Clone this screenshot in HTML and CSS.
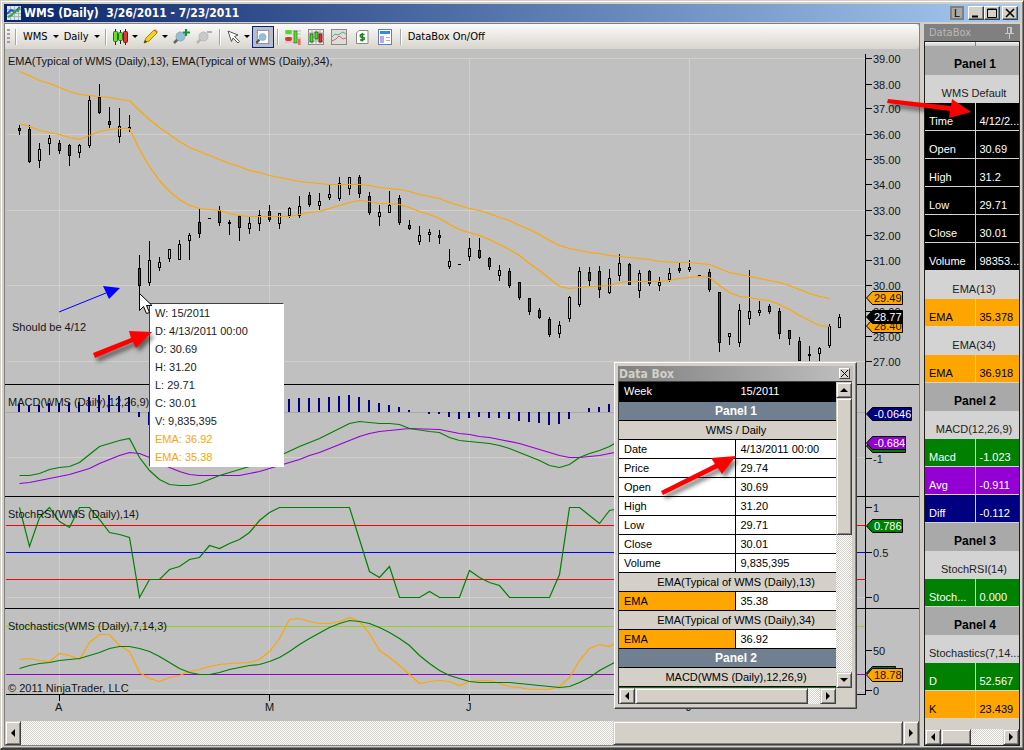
FILE: index.html
```html
<!DOCTYPE html>
<html lang="en">
<head>
<meta charset="utf-8">
<title>WMS (Daily) 3/26/2011 - 7/23/2011</title>
<link rel="stylesheet" href="styles.css">
</head>
<body>
<div class="window">
  <header class="titlebar">
    <svg class="title-icon" width="14" height="14" viewBox="0 0 14 14"><rect width="14" height="14" fill="#dfe6ea"/><path d="M0 3.500h14M0 7.500h14M0 10.500h14M3.500 0v14M7.500 0v14M11.500 0v14" stroke="#9fb6c4" stroke-width="1"/><path d="M0 8l4-4 4 2 5-5" fill="none" stroke="#2d59c8" stroke-width="2"/><path d="M1 11l4-2 3-4 3 0 2-3" fill="none" stroke="#3ca43c" stroke-width="2"/></svg>
    <h1 class="title">WMS (Daily)&nbsp; 3/26/2011 - 7/23/2011</h1>
    <div class="window-buttons">
      <button class="cap cap-link" aria-label="Link">L</button>
      <button class="cap" aria-label="Minimize"><svg width="10" height="10"><path d="M1 8.500h6" stroke="#000" stroke-width="2"/></svg></button>
      <button class="cap" aria-label="Maximize"><svg width="10" height="10"><path d="M.5 1h9v8.500h-9zM0 1.500h10" fill="none" stroke="#000"/></svg></button>
      <button class="cap cap-close" aria-label="Close"><svg width="10" height="10"><path d="M1 1l8 8M9 1l-8 8" stroke="#000" stroke-width="1.600"/></svg></button>
    </div>
  </header>

  <div class="body">
    <main class="chart-pane">
      <nav class="toolbar" aria-label="Chart tools">
        <span class="grip"></span><span class="sep"></span>
        <button class="tool tool-text">WMS <i class="caret"></i></button>
        <button class="tool tool-text">Daily <i class="caret"></i></button>
        <span class="sep"></span>
        <button class="tool" aria-label="Chart style"><svg width="16" height="16" viewBox="0 0 16 16"><path d="M2.500 0v16M7.500 1v14M12.500 0v16" stroke="#222"/><rect x=".5" y="2.500" width="4" height="10" rx="1" fill="#62e22e" stroke="#27701a"/><rect x="5.500" y="3.500" width="4" height="8" rx="1" fill="#62e22e" stroke="#27701a"/><rect x="10.500" y="2.500" width="4" height="11" rx="1" fill="#e63333" stroke="#7d1515"/></svg><i class="caret"></i></button>
        <button class="tool" aria-label="Draw"><svg width="16" height="16" viewBox="0 0 16 16"><path d="M1 14l2-5 8-8 3 3-8 8z" fill="#f5d21b" stroke="#a8820d"/><path d="M11 1l1-1 3 3-1 1z" fill="#e86a5c"/><path d="M1 14l1-3 2 2z" fill="#333"/></svg><i class="caret"></i></button>
        <button class="tool" aria-label="Zoom in"><svg width="17" height="16" viewBox="0 0 17 16"><path d="M1 14l4-4" stroke="#666" stroke-width="2.500"/><circle cx="7.500" cy="7.500" r="4.500" fill="#8fc0df" stroke="#9aa4ac"/><path d="M13 0v7M10 3.500h7" stroke="#0a9a2c" stroke-width="2"/></svg></button>
        <button class="tool" aria-label="Zoom out" disabled><svg width="17" height="16" viewBox="0 0 17 16"><path d="M1 14l4-4" stroke="#b5b5b5" stroke-width="2.500"/><circle cx="7.500" cy="7.500" r="4.500" fill="#c9c9c9" stroke="#b9b9b9"/><path d="M11 3h5" stroke="#b0b0b0" stroke-width="2"/></svg></button>
        <span class="sep"></span>
        <button class="tool" aria-label="Pointer"><svg width="14" height="16" viewBox="1 0 14 16"><path d="M2 2l10 4-3.500 1.500 5 5-1.500 1.500-5-5-1.500 3.500z" fill="#fff" stroke="#555"/></svg><i class="caret"></i></button>
        <button class="tool tool-on" aria-label="Zoom window" aria-pressed="true"><svg width="16" height="16" viewBox="0 0 16 16"><rect x="1.500" y=".5" width="13" height="15" fill="#fff" stroke="#8a8a8a"/><path d="M0 15l4-4" stroke="#555" stroke-width="2.500"/><circle cx="7.500" cy="8" r="4" fill="#8fc0df" stroke="#aab"/></svg></button>
        <span class="sep"></span>
        <button class="tool tool-wide" aria-label="Chart trader"><svg width="16" height="16" viewBox="0 0 16 16"><path d="M0 2h16M0 5h16M0 9h16M0 13h16" stroke="#bbb"/><rect x="0" y="1" width="7" height="4" rx="2" fill="#4fdd22"/><rect x="0" y="8" width="7" height="4" rx="2" fill="#e23030"/><rect x="9" y="2" width="3" height="12" fill="#59d92f" stroke="#3a7a24" stroke-width=".7"/><rect x="13" y="10" width="2.500" height="6" fill="#e66"/></svg></button>
        <button class="tool tool-wide" aria-label="Data series"><svg width="16" height="16" viewBox="0 0 16 16"><rect x=".5" y=".5" width="15" height="15" fill="#eee" stroke="#888"/><path d="M0 4h16M0 8h16M0 12h16M4 0v16M8 0v16M12 0v16" stroke="#aaa"/><rect x="2" y="5" width="3" height="8" fill="#4fdd22" stroke="#185c10" stroke-width=".8"/><rect x="7" y="3" width="3" height="7" fill="#4fdd22" stroke="#185c10" stroke-width=".8"/><rect x="11" y="5" width="3" height="8" fill="#e23030" stroke="#701010" stroke-width=".8"/></svg></button>
        <button class="tool tool-wide" aria-label="Indicators"><svg width="16" height="16" viewBox="0 0 16 16"><rect x=".5" y=".5" width="15" height="15" fill="#dcdcdc" stroke="#888"/><path d="M1 8l3-3 3 1 5-3 3 2" fill="none" stroke="#50b080"/><path d="M1 12l4-2 3-3 4 3 3-1" fill="none" stroke="#e06060"/></svg></button>
        <button class="tool tool-wide" aria-label="Strategies"><svg width="16" height="16" viewBox="0 0 16 16"><path d="M5 1.500h9v13H2.500V4z" fill="#fff" stroke="#8a8a8a"/><path d="M10.500 5.500H7.500a1.300 1.300 0 0 0 0 2.700h1.500a1.300 1.300 0 0 1 0 2.800H6M8.300 4v8.500" fill="none" stroke="#1f7a1f" stroke-width="1.500"/></svg></button>
        <button class="tool tool-wide" aria-label="Properties"><svg width="16" height="16" viewBox="0 0 16 16"><rect x="1.500" y=".5" width="13" height="15" fill="#fff" stroke="#667fb5"/><rect x="3" y="2" width="10" height="3" fill="#2f8de4"/><rect x="3" y="7" width="4" height="7" fill="#b9a7f2"/><path d="M9 8.500h4M9 11.500h4" stroke="#b0a8d8"/></svg></button>
        <span class="sep"></span>
        <button class="tool tool-text">DataBox On/Off</button>
      </nav>

      <div class="plot">
        <svg id="chart" class="chart" viewBox="5 49 914 671" role="img" aria-label="WMS daily price chart with indicators"></svg>

        <ul class="tip">
          <li>W: 15/2011</li><li>D: 4/13/2011 00:00</li><li>O: 30.69</li><li>H: 31.20</li><li>L: 29.71</li><li>C: 30.01</li><li>V: 9,835,395</li>
          <li class="tip-ema">EMA: 36.92</li><li class="tip-ema">EMA: 35.38</li>
        </ul>

        <section class="databox">
          <div class="databox-title"><span>Data Box</span><button class="mini-close" aria-label="Close Data Box"><svg width="7" height="7"><path d="M0 0l7 7M7 0L0 7" stroke="#000"/></svg></button></div>
          <div class="databox-body">
            <div class="databox-view">
              <table class="values">
                <tr class="week"><td>Week</td><td>15/2011</td></tr>
                <tr class="panel"><th colspan="2">Panel 1</th></tr>
                <tr class="series"><td colspan="2">WMS / Daily</td></tr>
                <tr><td>Date</td><td>4/13/2011 00:00</td></tr>
                <tr><td>Price</td><td>29.74</td></tr>
                <tr><td>Open</td><td>30.69</td></tr>
                <tr><td>High</td><td>31.20</td></tr>
                <tr><td>Low</td><td>29.71</td></tr>
                <tr><td>Close</td><td>30.01</td></tr>
                <tr><td>Volume</td><td>9,835,395</td></tr>
                <tr class="series"><td colspan="2">EMA(Typical of WMS (Daily),13)</td></tr>
                <tr class="ema"><td>EMA</td><td>35.38</td></tr>
                <tr class="series"><td colspan="2">EMA(Typical of WMS (Daily),34)</td></tr>
                <tr class="ema"><td>EMA</td><td>36.92</td></tr>
                <tr class="panel"><th colspan="2">Panel 2</th></tr>
                <tr class="series"><td colspan="2">MACD(WMS (Daily),12,26,9)</td></tr>
              </table>
            </div>
            <div class="vscroll"><button class="sb" aria-label="Up"><i class="tri up"></i></button><span class="thumb vthumb"></span><span class="fill"></span><button class="sb" aria-label="Down"><i class="tri down"></i></button></div>
            <div class="hscroll"><button class="sb" aria-label="Left"><i class="tri left"></i></button><span class="thumb hthumb"></span><span class="fill"></span><button class="sb" aria-label="Right"><i class="tri right"></i></button></div>
          </div>
        </section>
      </div>

      <div class="hscroll main-scroll"><button class="sb" aria-label="Scroll left"><i class="tri left"></i></button><span class="fill"></span><span class="thumb main-thumb"></span><button class="sb" aria-label="Scroll right"><i class="tri right"></i></button></div>
    </main>

    <aside class="side">
      <div class="side-title"><span>DataBox</span><svg width="9" height="12" viewBox="0 0 9 12"><path d="M2.500 0v6M2.500.5h4M5.500 0v6M6.500 0v6M0 6.500h9M4.500 7v5" fill="none" stroke="#c8c8c8"/></svg></div>
      <div class="side-body">
        <table class="side-table">
          <colgroup><col class="col-name"><col></colgroup>
          <tr class="head"><td></td><td></td></tr>
          <tr class="panel"><th colspan="2">Panel 1</th></tr>
          <tr class="series"><td colspan="2">WMS Default</td></tr>
          <tr class="k"><td>Time</td><td>4/12/2...</td></tr>
          <tr class="k"><td>Open</td><td>30.69</td></tr>
          <tr class="k"><td>High</td><td>31.2</td></tr>
          <tr class="k"><td>Low</td><td>29.71</td></tr>
          <tr class="k"><td>Close</td><td>30.01</td></tr>
          <tr class="k"><td>Volume</td><td>98353...</td></tr>
          <tr class="series"><td colspan="2">EMA(13)</td></tr>
          <tr class="o"><td>EMA</td><td>35.378</td></tr>
          <tr class="series"><td colspan="2">EMA(34)</td></tr>
          <tr class="o"><td>EMA</td><td>36.918</td></tr>
          <tr class="panel"><th colspan="2">Panel 2</th></tr>
          <tr class="series"><td colspan="2">MACD(12,26,9)</td></tr>
          <tr class="g"><td>Macd</td><td>-1.023</td></tr>
          <tr class="v"><td>Avg</td><td>-0.911</td></tr>
          <tr class="n"><td>Diff</td><td>-0.112</td></tr>
          <tr class="panel"><th colspan="2">Panel 3</th></tr>
          <tr class="series"><td colspan="2">StochRSI(14)</td></tr>
          <tr class="g"><td>Stoch...</td><td>0.000</td></tr>
          <tr class="panel"><th colspan="2">Panel 4</th></tr>
          <tr class="series"><td colspan="2">Stochastics(7,14...</td></tr>
          <tr class="g"><td>D</td><td>52.567</td></tr>
          <tr class="o"><td>K</td><td>23.439</td></tr>
        </table>
        <div class="hscroll"><button class="sb" aria-label="Left"><i class="tri left"></i></button><span class="thumb side-thumb"></span><span class="fill"></span><button class="sb" aria-label="Right"><i class="tri right"></i></button></div>
      </div>
    </aside>
  </div>

  <svg class="notes" width="1024" height="750" viewBox="0 0 1024 750" aria-hidden="true">
    <path class="cursor" d="M139.500 293.500v17l4-4 3 7 3-1-3-7h5.500z"/>
    <g class="arrow">
      <path d="M93 353l38-15-2-7 23 1-16 16-3-6-38 16z"/>
      <path d="M661 491l54-27-4-6 25-2-14 18-4-6-55 27z"/>
      <path d="M888 99l63 7 1-7 19 13-22 6 1-7-63-8z"/>
    </g>
  </svg>
</div>
<script src="chart.js"></script>
</body>
</html>
```
FILE: styles.css
```css
* { box-sizing: border-box; }
body { margin: 0; background: #d4d0c8; font-family: "Liberation Sans", Arial, sans-serif; font-size: 11px; color: #000; }
button { font: inherit; color: inherit; padding: 0; margin: 0; }
ul, h1 { margin: 0; padding: 0; }

.window { position: relative; min-height: 100vh; display: flex; flex-direction: column; padding: 3px 3px 2px 3px; border: 1px solid #d4d0c8; border-right-color: #404040; border-bottom: 2px solid #404040; box-shadow: inset 1px 1px #fff, inset -1px -1px #808080; }

.titlebar { display: flex; align-items: center; height: 18px; padding: 0 2px 0 3px; gap: 3px; background: linear-gradient(90deg, #0a246a, #a6caf0); }
.title { flex: 1; font: bold 12px/18px "DejaVu Sans Condensed", "DejaVu Sans", sans-serif; color: #fff; }
.window-buttons { display: flex; }
.cap { width: 16px; height: 14px; display: flex; align-items: center; justify-content: center; background: #d4d0c8; border: 1px solid; border-color: #fff #404040 #404040 #fff; box-shadow: inset -1px -1px #808080; }
.cap-link { width: 14px; margin-right: 4px; background: #a9a9a9; border: 2px solid #808080; box-shadow: none; line-height: 10px; }
.cap-close { margin-left: 2px; }

.body { flex: 1; display: flex; gap: 4px; }
.chart-pane { flex: 1; min-width: 0; display: flex; flex-direction: column; margin-top: 1px; border: 1px solid #808080; background: #c0c0c0; }

.toolbar { display: flex; align-items: center; height: 25px; padding-left: 2px; background: linear-gradient(#fbfbfa, #d8d5ce); border-radius: 0 4px 4px 0; font-family: "DejaVu Sans Condensed", "DejaVu Sans", sans-serif; }
.grip { width: 3px; height: 16px; background: repeating-linear-gradient(#a0a0a0 0 2px, transparent 2px 4px); }
.sep { width: 2px; height: 16px; margin: 0 3px; background: #a6a6a6; border-right: 1px solid #fff; }
.grip + .sep { margin: 0 3px 0 5px; }
.tool { height: 22px; display: flex; align-items: center; gap: 3px; padding: 0 3px; border: 0; background: none; }
.tool:has(.caret) { padding-right: 2px; }
.tool-text { gap: 5px; }
.tool-wide { padding: 0 4px 0 3px; }
.tool-wide:first-of-type { padding-left: 2px; }
.tool-on { width: 22px; justify-content: center; border: 1px solid #0a246a; background: #b6bdd2; }
.caret { border: 3px solid transparent; border-top-color: #000; border-bottom: 0; }

.plot { position: relative; flex: 1; }
.chart { display: block; width: 100%; height: auto; }
.chart text { font-size: 11px; fill: #141414; }
.chart .light { fill: #fff; }
.crisp { shape-rendering: crispEdges; }

.tip { position: absolute; left: 144px; top: 254px; width: 135px; list-style: none; background: #fff; border: 1px solid #fff; border-top-color: #404040; border-left: 1px solid #404040; padding: 0 5px; line-height: 18px; color: #1c1c1c; }
.tip-ema { color: #ffa500; }

.databox { position: absolute; left: 609px; top: 313px; width: 243px; padding: 3px; background: #d4d0c8; border: 1px solid; border-color: #fff #404040 #404040 #fff; box-shadow: inset -1px -1px #808080; }
.databox-title { display: flex; align-items: center; justify-content: space-between; height: 15px; padding: 0 3px 0 1px; background: linear-gradient(90deg, #808080, #c0c0c0); color: #d4d0c8; font: bold 12px "DejaVu Sans Condensed", "DejaVu Sans", sans-serif; }
.mini-close { width: 11px; height: 11px; display: flex; align-items: center; justify-content: center; background: #d4d0c8; border: 1px solid; border-color: #fff #404040 #404040 #fff; }
.databox-body { display: grid; grid-template-columns: 1fr 16px; margin: 0 1px 1px 0; border-left: 1px solid #404040; border-top: 1px solid #404040; }
.databox-view { height: 306px; border-bottom: 1px solid #008000; }
.values { width: 100%; border-collapse: collapse; table-layout: fixed; background: #fff; }
.values td, .values th { height: 19px; padding: 0 5px; line-height: 18px; border-bottom: 1px solid #000; overflow: hidden; white-space: nowrap; }
.values td:first-child { width: 116px; border-right: 1px solid #000; }
.values .week td { background: #000; color: #fff; border-color: #000; }
.values .panel th { padding-left: 22px; background: #708090; color: #fff; font-size: 12px; }
.values .series td { padding-left: 22px; background: #d4d0c8; text-align: center; border-right: 0; }
.values .ema td:first-child { background: #ffa500; }

.vscroll, .hscroll { display: flex; background: repeating-conic-gradient(#fff 0 25%, #d4d0c8 0 50%) 0 0 / 2px 2px; }
.vscroll { flex-direction: column; }
.hscroll { height: 16px; }
.sb, .thumb { display: flex; align-items: center; justify-content: center; flex: none; background: #d4d0c8; border: 1px solid; border-color: #d4d0c8 #404040 #404040 #d4d0c8; box-shadow: inset 1px 1px #fff, inset -1px -1px #808080; }
.sb { width: 16px; height: 16px; }
.fill { flex: 1; }
.vthumb { height: 137px; }
.hthumb { width: 173px; }
.side-thumb { width: 30px; }
.tri { border: 4px solid transparent; }
.tri.left { border-right-color: #000; border-left: 0; }
.tri.right { border-left-color: #000; border-right: 0; }
.tri.up { border-bottom-color: #000; border-top: 0; }
.tri.down { border-top-color: #000; border-bottom: 0; }
.main-scroll { height: 24px; }
.main-scroll .sb { height: 24px; }
.main-thumb { width: 290px; }

.side { width: 96px; flex: none; display: flex; flex-direction: column; padding-top: 2px; }
.side-title { height: 17px; display: flex; align-items: center; justify-content: space-between; padding: 0 6px 0 5px; background: #808080; color: #b8b8b8; font-family: "DejaVu Sans Condensed", "DejaVu Sans", sans-serif; }
.side-body { flex: 1; display: flex; flex-direction: column; border: 1px solid #202020; background: #d4d0c8; }
.side-body .hscroll { margin-top: auto; }
.side-table { width: 100%; border-collapse: collapse; table-layout: fixed; }
.col-name { width: 50px; }
.side-table td, .side-table th { height: 28px; padding: 9px 0 0 4px; line-height: 18px; border-bottom: 1px solid #d3d3d3; white-space: nowrap; overflow: hidden; }
.side-table td:first-child { border-right: 1px solid #d3d3d3; }
.side-table .head td { height: 4px; padding: 0; background: linear-gradient(#f4f4f4, #c8c8c8); border-right-color: #808080; border-bottom: 0; }
.side-table .panel th { padding-left: 6px; background: #a9a9a9; border-color: #a9a9a9; text-align: center; font-size: 12px; }
.side-table .series td { background: #d3d3d3; color: #222; text-align: center; border-right: 0; }
.k td { background: #000; color: #fff; }
.o td { background: #ffa500; }
.g td { background: #008000; color: #fff; }
.v td { background: #9400d3; color: #fff; }
.n td { background: #000080; color: #fff; }

.notes { position: absolute; left: -1px; top: -1px; pointer-events: none; }
.cursor { fill: #fff; stroke: #000; }
.arrow { fill: #f00; filter: drop-shadow(3px 4px 2px rgba(0, 0, 0, .5)); }
```
FILE: chart.js
```js
const svg = document.getElementById('chart');
const out = [];

const line = (x1, y1, x2, y2, color, w = 1) =>
  out.push(`<path class="crisp" d="M${x1} ${y1}L${x2} ${y2}" stroke="${color}" stroke-width="${w}"/>`);
const text = (x, y, s, cls = '') => out.push(`<text x="${x}" y="${y}" class="${cls}">${s}</text>`);
const curve = (pts, color) => {
  const n = pts.trim().split(/\s+/).map(p => p.split(',').map(Number));
  out.push(`<polyline points="${n.map(([x, y]) => `${x + 0.5},${y + 0.5}`).join(' ')}" fill="none" stroke="${color}" stroke-width="1.2"/>`);
};

// Grid
[59.5, 269.5, 469.5, 689.5].forEach(x => line(x, 58, x, 694, '#d4d0c8'));
[58.5, 134.5, 210.5, 285.5, 361.5, 457.5, 597.5, 690.5].forEach(y => line(7, y, 866, y, '#d4d0c8'));
line(6, 412.5, 866, 412.5, '#a9a9a9');
line(6, 525.5, 866, 525.5, '#f00');
line(6, 579.5, 866, 579.5, '#f00');
line(6, 552.5, 866, 552.5, '#00f');
line(6, 626.5, 866, 626.5, '#9acd32');
line(6, 674.5, 866, 674.5, '#9400d3');

// Candles, one every 10px: high, body top, body bottom, low, direction
const candles = `125,128,131,135,r 125,129,162,163,r 143,149,161,168,g 135,138,144,155,g 140,143,151,154,r 144,145,156,166,r 144,145,153,158,g 96,100,146,148,g 84,97,113,114,r 107,121,125,128,r 108,126,137,143,g 115,127,129,132,r 255,268,286,310,r 241,260,283,286,g 257,262,268,271,g 249,249,259,262,g 240,244,260,260,g 233,235,241,260,g 209,222,234,238,r 218,218,219,219,d 206,210,223,226,r 220,222,224,235,d 215,216,228,241,r 217,223,229,234,g 210,215,224,231,g 205,211,220,222,r 213,213,224,229,g 207,208,216,218,g 196,206,216,218,g 192,195,205,207,r 193,201,206,210,g 184,194,198,200,g 177,183,199,201,g 177,177,189,195,g 175,177,194,198,r 192,196,213,215,r 205,212,217,226,g 191,205,213,213,g 195,198,223,225,r 220,225,229,230,r 226,235,242,245,g 229,232,235,242,g 230,235,238,244,r 249,261,267,269,g 264,264,265,265,d 238,248,257,261,g 238,250,258,259,r 257,258,267,270,r 265,270,276,281,g 268,271,286,288,r 282,282,298,300,r 298,298,312,315,r 308,310,318,319,r 317,319,335,337,r 321,325,334,338,g 296,297,319,322,g 267,271,305,307,g 267,272,281,286,r 266,271,290,298,r 269,278,293,294,g 254,263,276,281,g 263,264,285,285,r 270,273,291,298,g 270,271,284,286,r 277,282,286,291,g 268,273,280,282,g 263,268,271,273,r 260,267,270,272,g 275,275,276,276,d 269,272,290,292,r 292,292,343,352,r 333,333,337,345,g 304,310,343,347,g 270,311,319,325,g 301,310,313,316,g 304,306,312,314,r 308,311,334,339,r 330,330,339,345,r 337,341,361,361,r 346,354,356,361,d 347,348,354,361,g 324,326,346,348,g 314,317,328,328,g`.split(' ');
const fills = { r: '#e01010', g: '#98e898', d: '#000' };
candles.forEach((c, i) => {
  const [h, t, b, l, k] = c.split(',');
  const x = 19 + i * 10;
  out.push(`<g class="crisp"><rect x="${x}" y="${h}" width="1" height="${l - h}"/><rect x="${x - 1}" y="${t}" width="3" height="${b - t}"/>`);
  if (b - t > 2) out.push(`<rect x="${x}" y="${+t + 1}" width="1" height="${b - t - 2}" fill="${fills[k]}"/>`);
  out.push('</g>');
});

// MACD histogram: x, end of bar
`19,404 29,406 39,405 49,403 59,403 69,403 79,402 89,397 99,395 109,395 119,396 129,397 139,417 149,425 289,399 299,398 309,398 319,398 329,397 339,396 349,395 359,397 369,400 379,403 389,405 399,407 409,410 429,414 439,414 449,417 459,419 469,418 479,417 489,418 499,418 509,419 519,421 529,422 539,423 549,425 559,424 569,419 589,408 599,407 609,404`.split(' ').forEach(p => {
  const [x, y] = p.split(',').map(Number);
  out.push(`<rect class="crisp" x="${x - 1}" y="${Math.min(y, 412)}" width="2" height="${Math.abs(y - 412)}" fill="#000080"/>`);
});

// EMA(34) and EMA(13)
curve('19,71 29,75 39,80 49,83 59,87 69,91 79,94 89,95 99,96 109,97 119,99 129,100 139,110 149,119 159,127 169,134 179,141 189,147 199,151 209,155 219,159 229,163 239,166 249,170 259,172 269,175 279,177 289,179 299,181 309,182 319,183 329,184 359,184 369,185 379,187 389,188 399,189 409,191 419,194 429,196 439,198 449,202 459,205 469,208 479,210 489,213 499,217 509,220 519,225 529,229 539,234 549,240 559,245 569,248 579,250 589,252 599,253 609,255 619,256 629,257 649,259 659,261 679,262 689,262 709,264 719,268 729,272 739,274 749,276 769,280 779,282 789,285 799,289 809,293 819,296 829,298', '#ffa500');
curve('19,123 29,126 39,130 49,132 59,134 69,137 79,139 89,135 99,131 109,129 119,128 129,128 139,149 149,166 159,180 169,191 179,199 189,205 199,208 209,209 219,210 229,213 239,215 249,216 289,216 299,214 309,212 319,211 329,208 339,205 349,202 359,200 369,201 379,203 389,203 399,204 409,207 419,211 429,214 439,218 449,224 459,229 469,232 479,235 489,239 499,244 509,249 519,255 529,263 539,270 549,278 559,286 569,288 579,287 589,286 609,285 619,282 629,281 659,281 669,280 679,278 689,277 699,276 709,277 719,285 729,292 739,296 749,297 759,299 769,300 779,304 789,309 799,315 809,320 819,325 829,326', '#ffa500');

// MACD average and line
curve('19,483 29,482 39,480 49,478 59,476 69,474 79,471 89,468 99,463 109,459 119,455 129,452 139,453 149,457 159,462 169,467 179,471 189,474 199,475 239,475 249,473 259,471 269,468 279,465 289,462 299,459 309,455 319,452 329,448 339,444 349,440 359,436 369,433 379,431 399,429 409,428 439,429 459,433 469,434 479,436 489,437 499,439 519,443 529,446 539,449 549,452 559,455 569,457 579,457 599,455 614,452', '#9400d3');
curve('19,475 29,475 39,473 49,469 59,467 69,466 79,462 89,454 99,446 109,443 119,440 129,438 139,457 149,470 159,479 169,484 179,485 189,485 199,483 209,479 219,475 229,472 239,469 249,466 269,460 284,453 299,446 309,442 319,438 329,433 339,428 349,423 359,421 379,423 389,423 399,424 409,428 429,431 439,432 449,437 459,440 469,441 479,442 489,443 499,445 509,448 519,452 529,456 539,460 549,465 559,467 569,464 579,457 589,453 599,450 609,446 614,443', '#008000');

// StochRSI
curve('19,507 29,546 39,517 49,507 59,521 69,527 79,507 89,507 99,519 109,532 119,534 129,537 139,597 149,579 159,579 169,569 179,566 189,559 199,557 209,545 219,548 229,543 239,539 249,532 259,520 269,512 279,507 349,507 369,571 379,577 389,566 399,597 419,597 429,591 439,597 459,597 469,570 479,577 489,582 499,585 509,597 549,597 559,574 569,507 579,507 589,515 599,523 609,510 614,509', '#008000');

// Stochastics K and D
curve('19,659 29,658 39,660 49,661 59,653 69,655 79,659 89,642 99,634 109,634 119,645 129,651 139,672 149,678 159,681 169,677 179,675 189,671 199,669 209,666 219,664 229,663 249,662 259,659 269,651 279,638 289,619 299,618 309,621 319,623 329,623 339,621 349,617 359,621 369,633 379,650 389,657 399,665 409,674 419,683 429,681 439,680 449,681 459,685 469,681 479,680 489,680 499,683 509,686 519,687 529,689 549,689 559,686 569,677 579,660 589,648 599,644 609,646 614,643', '#ffa500');
curve('19,668 29,665 39,663 49,662 59,660 79,658 89,655 99,652 109,648 119,646 129,646 139,648 149,651 159,656 169,662 179,668 189,672 199,674 209,674 219,672 229,669 249,665 259,664 269,661 279,657 289,651 299,644 309,638 329,627 339,623 349,620 359,621 369,623 379,627 389,632 399,638 409,645 419,655 429,663 439,670 449,675 469,681 479,682 509,682 529,684 559,687 569,686 579,682 589,677 599,670 614,662', '#008000');

// Panel borders and axes
[384.5, 496.5, 608.5].forEach(y => line(5, y, 919, y, '#000'));
line(6, 694.5, 866, 694.5, '#000');
line(865.5, 54, 865.5, 695, '#000');
[[59, 'A'], [269, 'M'], [469, 'J'], [689, 'J']].forEach(([x, s]) => {
  line(x + 0.5, 695, x + 0.5, 701, '#000');
  text(s === 'J' ? x - 3 : x - 4, 711, s);
});
[[58, '39.00'], [84, '38.00'], [108, '37.00'], [134, '36.00'], [159, '35.00'], [184, '34.00'], [210, '33.00'], [235, '32.00'], [260, '31.00'], [285, '30.00'], [311, '29.00'], [336, '28.00'], [361, '27.00'], [458, '-1'], [507, '1'], [552, '0.5'], [597, '0'], [650, '50'], [690, '0']].forEach(([y, s]) => {
  line(866, y + 0.5, 872, y + 0.5, '#000');
  text(873, y + 5, s);
});

// Price flags
const flag = (y, right, fill, s, light) => {
  out.push(`<path d="M866.500 ${y}l6-6.500H${right}v13H872.500z" fill="${fill}" stroke="#000"/>`);
  if (s) text(874, y + 4, s, light ? 'light' : '');
};
flag(298, 902.5, '#ffa500', '29.49');
flag(326, 902.5, '#ffa500', '28.40');
flag(317, 902.5, '#000', '28.77', true);
flag(414, 911.5, '#000080', '-0.0646', true);
flag(446, 905.5, '#008000', '');
flag(443, 905.5, '#9400d3', '-0.684', true);
flag(526, 902.5, '#008000', '0.786', true);
flag(673, 895.5, '#008000', '');
flag(675, 902.5, '#ffa500', '18.78');

// Panel captions
text(8, 65, 'EMA(Typical of WMS (Daily),13), EMA(Typical of WMS (Daily),34),');
text(8, 406, 'MACD(WMS (Daily),12,26,9)');
text(8, 518, 'StochRSI(WMS (Daily),14)');
text(8, 630, 'Stochastics(WMS (Daily),7,14,3)');
text(8, 692, '© 2011 NinjaTrader, LLC');
text(12, 331, 'Should be 4/12');
out.push('<path d="M59 312L106 293" stroke="#00f"/><path d="M103 286l17 2-11 11z" fill="#00f"/>');

svg.innerHTML = out.join('');
```
